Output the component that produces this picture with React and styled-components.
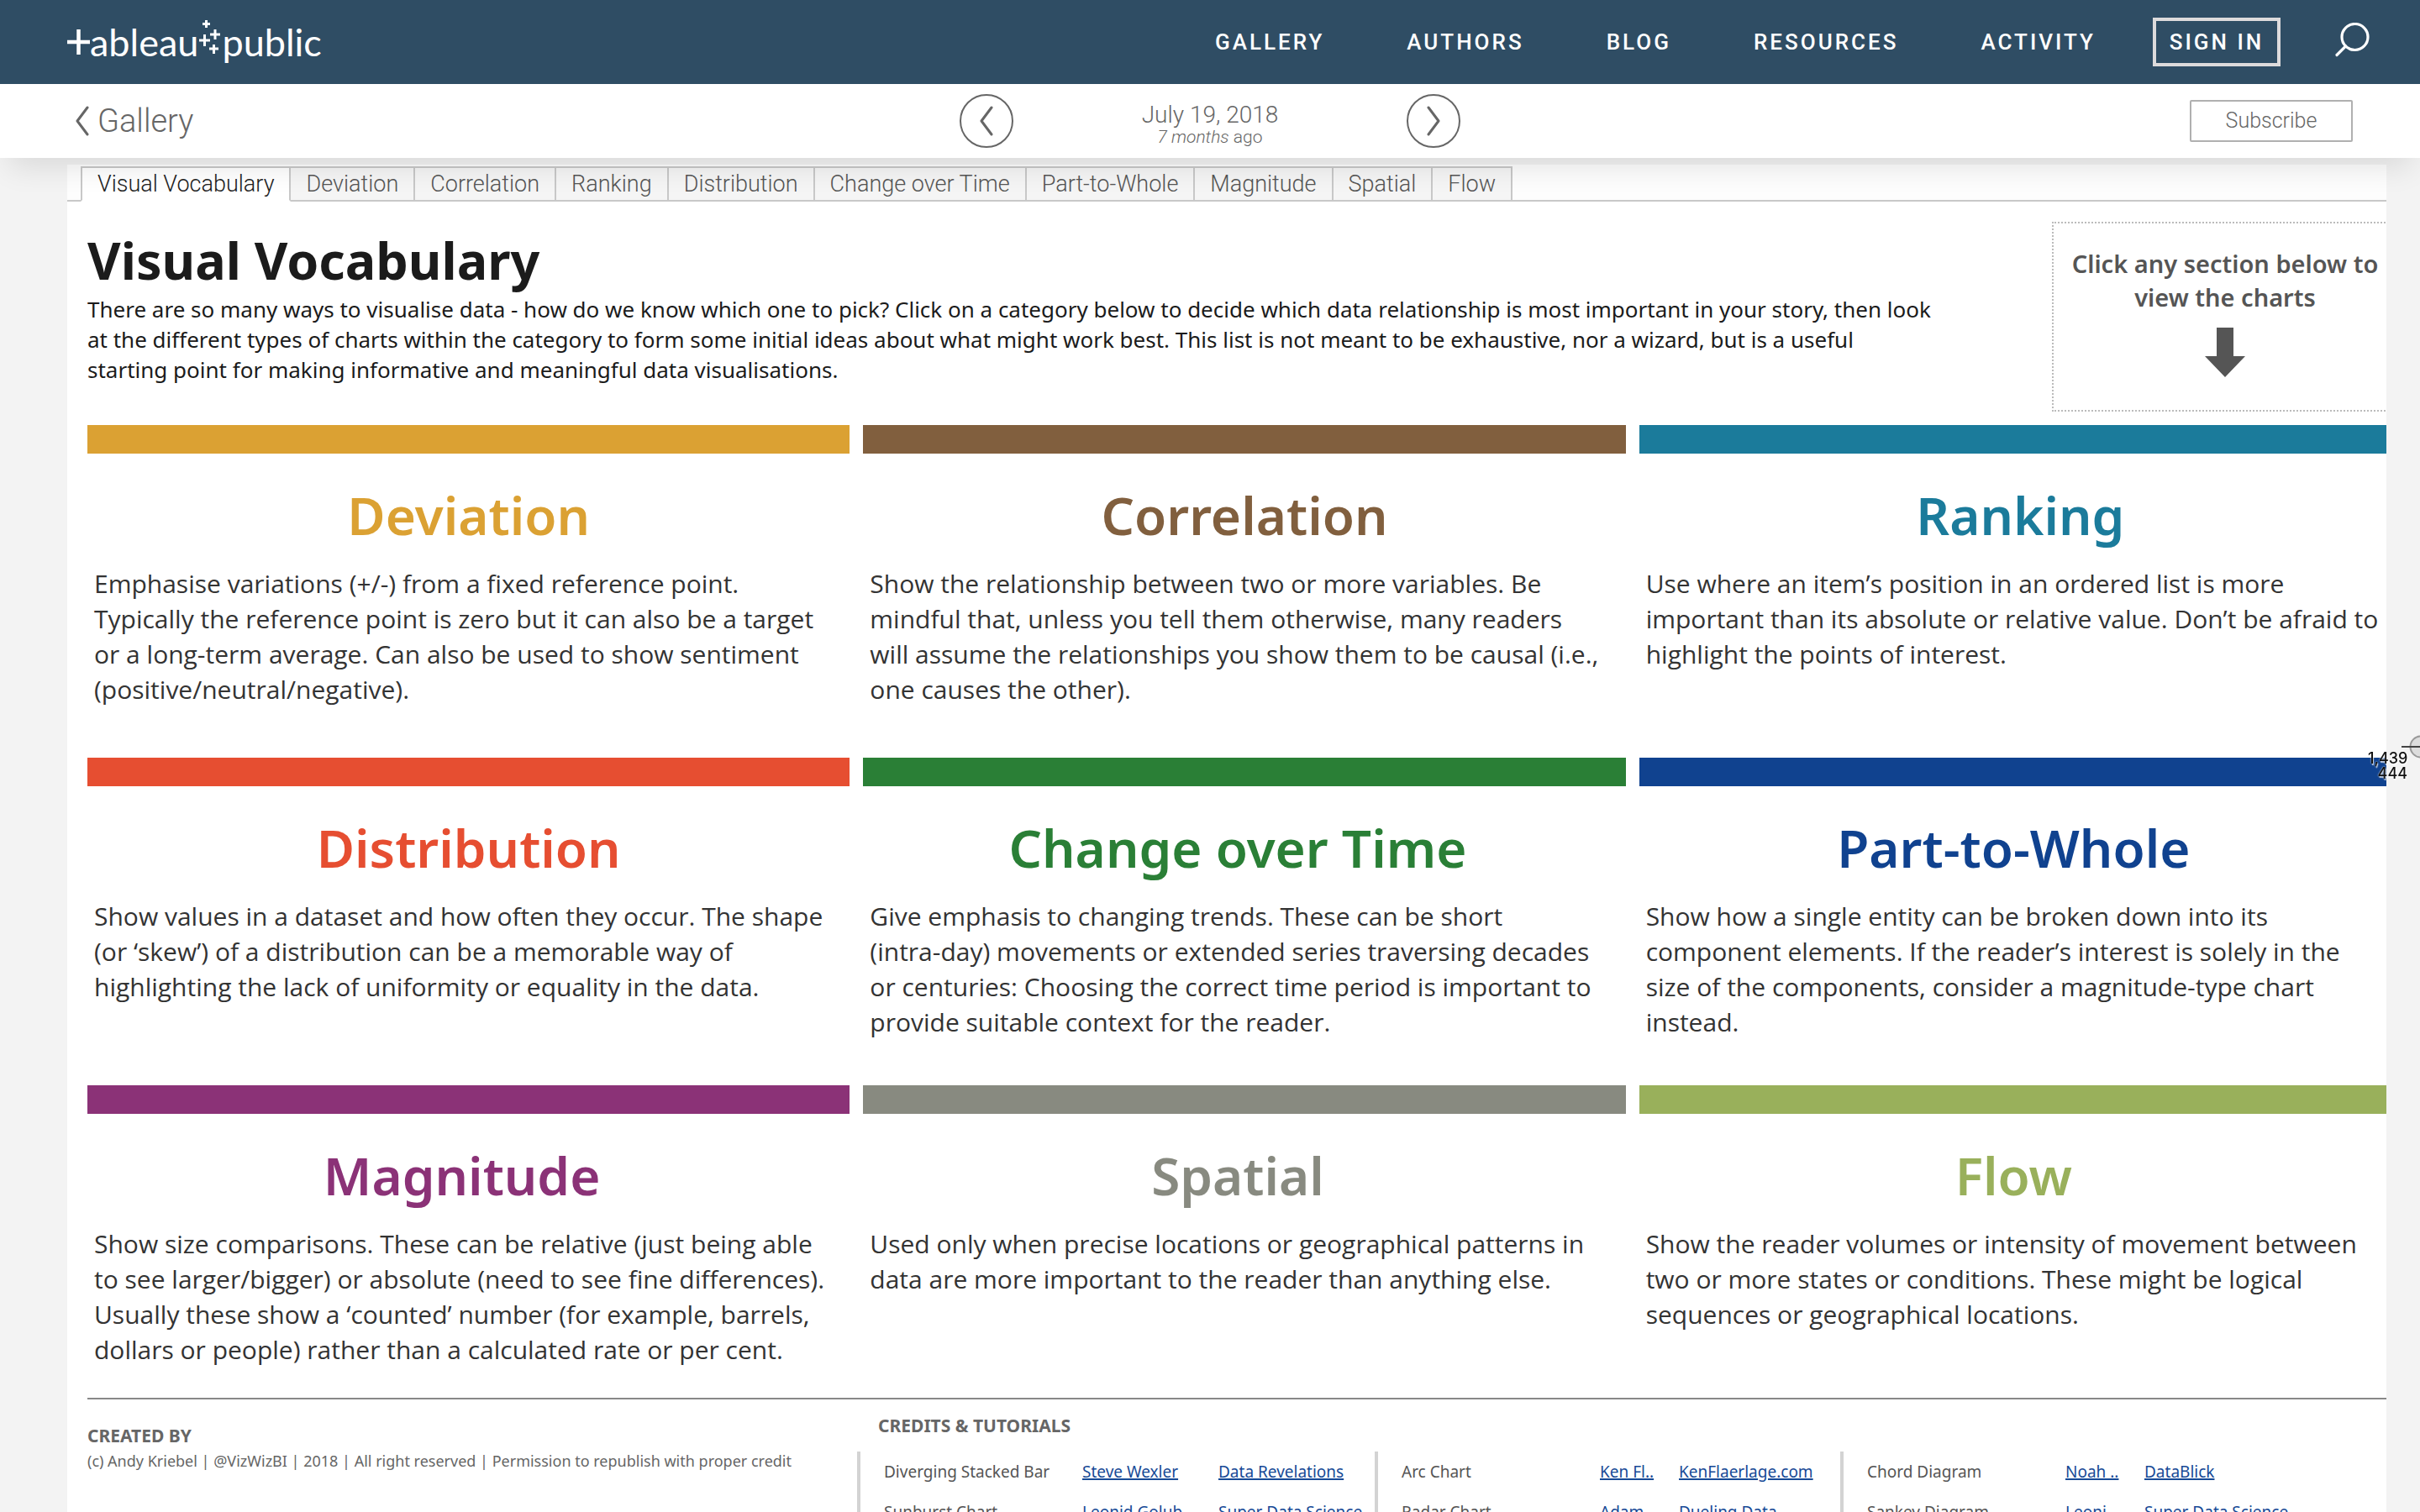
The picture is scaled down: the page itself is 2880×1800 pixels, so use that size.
import React from "react";
import styled, { createGlobalStyle } from "styled-components";

const ui = `Roboto, "Liberation Sans", sans-serif`;
const book = `"Noto Sans", "Open Sans", sans-serif`;
const reading = `"Open Sans", "Noto Sans", sans-serif`;

const GlobalStyle = createGlobalStyle`
  * { box-sizing: border-box; }
  html, body { margin: 0; background: #f3f3f3; }
  h1, h2, h3, p { margin: 0; }
  button { font: inherit; color: inherit; background: none; border: 0; padding: 0; cursor: pointer; }
  a { color: inherit; text-decoration: none; }
`;

const Page = styled.div`
  height: 100vh;
  overflow: hidden;
  font-family: ${ui};
`;

const Header = styled.header`
  height: 100px;
  display: flex;
  align-items: center;
  justify-content: space-between;
  padding: 0 60px 0 80px;
  background: #2f4d64;
  color: #fff;
`;

const Logo = styled.a`
  display: flex;
  align-items: center;
  font-family: Lato, sans-serif;
  font-size: 45px;
  line-height: 60px;
  svg { display: block; }
`;

const Nav = styled.nav`
  display: flex;
  align-items: center;
  gap: 98px;
  padding-right: 4px;
  font-size: 26px;
  font-weight: 500;
  letter-spacing: 3px;
`;

const HeaderEnd = styled.div`
  display: flex;
  align-items: center;
  gap: 64px;
`;

const SignIn = styled.button`
  height: 58px;
  width: 152px;
  border: 4px solid #dddbdc;
  font-size: 26px;
  font-weight: 500;
  letter-spacing: 3px;
`;

const SearchButton = styled.button`
  display: flex;
`;

const SubBar = styled.div`
  position: relative;
  z-index: 1;
  height: 88px;
  display: grid;
  grid-template-columns: 1fr auto 1fr;
  align-items: center;
  padding: 0 80px;
  background: #fff;
  color: #666;
  font-weight: 300;
  box-shadow: 0 20px 36px -10px rgba(0, 0, 0, 0.11);
`;

const BackLink = styled.a`
  display: flex;
  align-items: center;
  gap: 10px;
  padding-left: 10px;
  font-size: 38px;
`;

const Pager = styled.div`
  display: grid;
  grid-template-columns: 64px 468px 64px;
  align-items: center;
`;

const RoundButton = styled.button`
  width: 64px;
  height: 64px;
  display: flex;
  align-items: center;
  justify-content: center;
  border: 2px solid #666;
  border-radius: 50%;
`;

const DateBlock = styled.div`
  padding-top: 7px;
  text-align: center;
  font-size: 28px;
  line-height: 30px;
`;

const Ago = styled.div`
  font-size: 21px;
  line-height: 22px;
`;

const Subscribe = styled.button`
  justify-self: end;
  width: 194px;
  height: 50px;
  padding-bottom: 2px;
  border: 2px solid #b0b0b0;
  border-radius: 2px;
  font-size: 25px;
`;

const Sheet = styled.main`
  margin: 8px 40px 0 80px;
  background: #fff;
  overflow: hidden;
`;

const Tabs = styled.div`
  display: flex;
  padding: 2px 0 0 16px;
  background: #fdfdfd;
  box-shadow: inset 0 -2px #c8c8c8;
`;

const Tab = styled.button`
  height: 42px;
  padding: 0 18px;
  border: 2px solid #c8c8c8;
  border-left-width: ${(p) => (p.$active ? "2px" : "0")};
  border-bottom-color: ${(p) => (p.$active ? "#fff" : "#c8c8c8")};
  background: ${(p) => (p.$active ? "#fff" : "#f5f5f5")};
  color: ${(p) => (p.$active ? "#222" : "#555")};
  font-size: 27px;
  font-weight: 300;
  line-height: 36px;
  white-space: nowrap;
`;

const Dashboard = styled.div`
  margin-right: -18px;
  padding-left: 24px;
  font-family: ${book};
`;

const Intro = styled.section`
  display: flex;
  justify-content: space-between;
  align-items: flex-start;
  padding-top: 24px;
  height: 266px;
`;

const IntroText = styled.div`
  padding-top: 6px;
`;

const Title = styled.h1`
  font-size: 61px;
  line-height: 80px;
  font-weight: 700;
  color: #1b1b1b;
`;

const Lead = styled.p`
  white-space: pre;
  font-size: 26px;
  line-height: 36px;
  color: #1b1b1b;
`;

const Callout = styled.aside`
  width: 416px;
  height: 226px;
  padding: 28px 4px 0 0;
  border: 2px dotted #bbb;
  display: flex;
  flex-direction: column;
  align-items: center;
  gap: 16px;
  text-align: center;
  white-space: pre;
  font-size: 29px;
  line-height: 40px;
  font-weight: 600;
  color: #555;
`;

const Cards = styled.section`
  display: grid;
  grid-template-columns: repeat(3, 1fr);
  grid-template-rows: 396px 390px 372px;
  column-gap: 16px;
`;

const Card = styled.a`
  display: block;
  color: #333;
  border-top: 34px solid ${(p) => p.$color};
`;

const CardTitle = styled.h2`
  padding: 32px ${(p) => (p.$inset ? "16px" : "0")} 19px 0;
  font-size: 62px;
  line-height: 83px;
  font-weight: 600;
  text-align: center;
  color: ${(p) => p.$color};
`;

const CardText = styled.p`
  padding-left: 8px;
  font-family: ${reading};
  white-space: pre;
  font-size: 30px;
  line-height: 42px;
`;

const Footer = styled.footer`
  display: grid;
  grid-template-columns: 916px 1fr;
  border-top: 2px solid #888;
  color: #666;
`;

const Created = styled.div`
  padding-top: 28px;
  font-size: 18px;
  line-height: 30px;
  white-space: nowrap;
`;

const FooterTitle = styled.h3`
  font-size: 21px;
  line-height: 30px;
  font-weight: 700;
`;

const Credits = styled.div`
  padding-top: 16px;
  font-size: 19px;
  ${FooterTitle} { padding-left: 25px; margin-bottom: 16px; }
`;

const CreditGroups = styled.div`
  display: grid;
  grid-template-columns: 616px 554px 1fr;
`;

const CreditTable = styled.table`
  table-layout: fixed;
  width: 100%;
  border-collapse: collapse;
  border-left: 4px solid #d3d3d3;
  td { height: 48px; padding: 0; line-height: 26px; white-space: nowrap; color: #555; }
  td:first-child { padding-left: 28px; }
  a { color: #174a96; text-decoration: underline; text-decoration-thickness: 2px; }
`;

const Col = styled.col`
  width: ${(p) => p.$w};
`;

const Pointer = styled.div`
  position: fixed;
  z-index: 2;
  top: 874px;
  right: 0;
  width: 62px;
  color: #111;
  font-family: Inter, sans-serif;
  font-size: 18px;
  font-weight: 500;
  line-height: 18px;
  text-align: right;
  text-shadow: 0 0 2px #fff, 1px 2px 1px rgba(255, 255, 255, 0.7);
  svg { display: block; margin-left: auto; }
`;

const Coordinates = styled.div`
  margin-top: -10px;
  padding-right: 15px;
`;

function Chevron({ right }) {
  return (
    <svg width="16" height="36" viewBox="0 0 16 36" fill="none" stroke="#666" strokeWidth="3" strokeLinecap="round" strokeLinejoin="round" aria-hidden="true">
      <path d={right ? "M2 2 14 18 2 34" : "M14 2 2 18 14 34"} />
    </svg>
  );
}

const tabs = ["Visual Vocabulary", "Deviation", "Correlation", "Ranking", "Distribution", "Change over Time", "Part-to-Whole", "Magnitude", "Spatial", "Flow"];

const cards = [
  { name: "Deviation", color: "#dba133", text: "Emphasise variations (+/-) from a fixed reference point.\nTypically the reference point is zero but it can also be a target\nor a long-term average. Can also be used to show sentiment\n(positive/neutral/negative)." },
  { name: "Correlation", color: "#815f3e", text: "Show the relationship between two or more variables. Be\nmindful that, unless you tell them otherwise, many readers\nwill assume the relationships you show them to be causal (i.e.,\none causes the other)." },
  { name: "Ranking", color: "#1b7b9b", text: "Use where an item’s position in an ordered list is more\nimportant than its absolute or relative value. Don’t be afraid to\nhighlight the points of interest." },
  { name: "Distribution", color: "#e64e31", text: "Show values in a dataset and how often they occur. The shape\n(or ‘skew’) of a distribution can be a memorable way of\nhighlighting the lack of uniformity or equality in the data." },
  { name: "Change over Time", color: "#2a7f36", inset: true, text: "Give emphasis to changing trends. These can be short\n(intra-day) movements or extended series traversing decades\nor centuries: Choosing the correct time period is important to\nprovide suitable context for the reader." },
  { name: "Part-to-Whole", color: "#10428f", inset: true, text: "Show how a single entity can be broken down into its\ncomponent elements. If the reader’s interest is solely in the\nsize of the components, consider a magnitude-type chart\ninstead." },
  { name: "Magnitude", color: "#8b3277", inset: true, text: "Show size comparisons. These can be relative (just being able\nto see larger/bigger) or absolute (need to see fine differences).\nUsually these show a ‘counted’ number (for example, barrels,\ndollars or people) rather than a calculated rate or per cent." },
  { name: "Spatial", color: "#888a80", inset: true, text: "Used only when precise locations or geographical patterns in\ndata are more important to the reader than anything else." },
  { name: "Flow", color: "#99b05b", inset: true, text: "Show the reader volumes or intensity of movement between\ntwo or more states or conditions. These might be logical\nsequences or geographical locations." },
];

const credits = [
  { cols: ["266px", "162px", "auto"], rows: [["Diverging Stacked Bar", "Steve Wexler", "Data Revelations"], ["Sunburst Chart", "Leonid Golub", "Super Data Science"]] },
  { cols: ["266px", "94px", "auto"], rows: [["Arc Chart", "Ken Fl..", "KenFlaerlage.com"], ["Radar Chart", "Adam ..", "Dueling Data"]] },
  { cols: ["266px", "94px", "auto"], rows: [["Chord Diagram", "Noah ..", "DataBlick"], ["Sankey Diagram", "Leoni..", "Super Data Science"]] },
];

export default function App() {
  return (
    <Page>
      <GlobalStyle />
      <Header>
        <Logo href="#home" aria-label="tableau public">
          <svg width="27" height="48" viewBox="0 0 27 48" stroke="#fff" strokeWidth="4.5" aria-hidden="true">
            <path d="M0 24H27M13.500 9V39" />
          </svg>
          <span>ableau</span>
          <svg width="28" height="56" viewBox="0 0 28 56" stroke="#fff" strokeWidth="3" aria-hidden="true">
            <path d="M5 6.500H14M9.500 2V11M14 19H26M20 13V25M1 26H14M7.500 19V33M13 36H24M18.500 31V42" />
          </svg>
          <span>public</span>
        </Logo>
        <HeaderEnd>
          <Nav>
            <a href="#gallery">GALLERY</a>
            <a href="#authors">AUTHORS</a>
            <a href="#blog">BLOG</a>
            <a href="#resources">RESOURCES</a>
            <a href="#activity">ACTIVITY</a>
          </Nav>
          <SignIn type="button">SIGN IN</SignIn>
          <SearchButton type="button" aria-label="Search">
            <svg width="42" height="46" viewBox="0 0 42 46" fill="none" stroke="#fff" strokeWidth="3.2" strokeLinecap="round" aria-hidden="true">
              <circle cx="24.500" cy="17" r="15.500" />
              <path d="M13.500 28 3 38.500" />
            </svg>
          </SearchButton>
        </HeaderEnd>
      </Header>

      <SubBar>
        <BackLink href="#gallery"><Chevron />Gallery</BackLink>
        <Pager>
          <RoundButton type="button" aria-label="Previous"><Chevron /></RoundButton>
          <DateBlock>
            July 19, 2018
            <Ago><em>7 months</em> ago</Ago>
          </DateBlock>
          <RoundButton type="button" aria-label="Next"><Chevron right /></RoundButton>
        </Pager>
        <Subscribe type="button">Subscribe</Subscribe>
      </SubBar>

      <Sheet>
        <Tabs role="tablist">
          {tabs.map((t, i) => (
            <Tab key={t} type="button" role="tab" aria-selected={i === 0} $active={i === 0}>{t}</Tab>
          ))}
        </Tabs>
        <Dashboard>
          <Intro>
            <IntroText>
              <Title>Visual Vocabulary</Title>
              <Lead>{"There are so many ways to visualise data - how do we know which one to pick? Click on a category below to decide which data relationship is most important in your story, then look\nat the different types of charts within the category to form some initial ideas about what might work best. This list is not meant to be exhaustive, nor a wizard, but is a useful\nstarting point for making informative and meaningful data visualisations."}</Lead>
            </IntroText>
            <Callout>
              <p>{"Click any section below to\nview the charts"}</p>
              <svg width="48" height="60" viewBox="0 0 48 60" fill="#555" aria-hidden="true">
                <path d="M14 0H34V34H48L24 59 0 34H14Z" />
              </svg>
            </Callout>
          </Intro>
          <Cards>
            {cards.map((c) => (
              <Card key={c.name} href={"#" + c.name} $color={c.color}>
                <CardTitle $color={c.color} $inset={c.inset}>{c.name}</CardTitle>
                <CardText>{c.text}</CardText>
              </Card>
            ))}
          </Cards>
          <Footer>
            <Created>
              <FooterTitle>CREATED BY</FooterTitle>
              <p>(c) Andy Kriebel | @VizWizBI | 2018 | All right reserved | Permission to republish with proper credit</p>
            </Created>
            <Credits>
              <FooterTitle>CREDITS &amp; TUTORIALS</FooterTitle>
              <CreditGroups>
                {credits.map((g, i) => (
                  <CreditTable key={i}>
                    <colgroup>{g.cols.map((w, j) => <Col key={j} $w={w} />)}</colgroup>
                    <tbody>
                      {g.rows.map(([chart, author, site]) => (
                        <tr key={chart}>
                          <td>{chart}</td>
                          <td><a href="#author">{author}</a></td>
                          <td><a href="#site">{site}</a></td>
                        </tr>
                      ))}
                    </tbody>
                  </CreditTable>
                ))}
              </CreditGroups>
            </Credits>
          </Footer>
        </Dashboard>
      </Sheet>

      <Pointer>
        <svg width="24" height="30" viewBox="0 0 24 30" aria-hidden="true">
          <circle cx="25" cy="15" r="12.500" fill="#ddd" stroke="#999" strokeWidth="2" />
          <path d="M2 15H24" stroke="#444" strokeWidth="2" />
        </svg>
        <Coordinates>1,439<br />444</Coordinates>
      </Pointer>
    </Page>
  );
}
